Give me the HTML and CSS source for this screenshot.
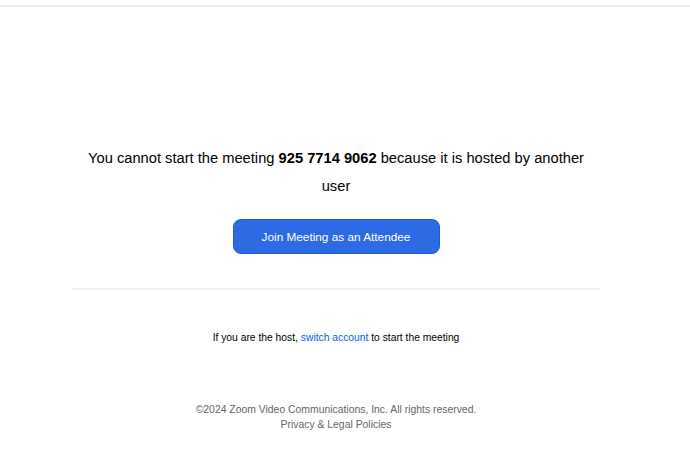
FILE: index.html
```html
<!DOCTYPE html>
<html lang="en">
<head>
<meta charset="utf-8">
<title>Zoom</title>
<link rel="stylesheet" href="styles.css">
</head>
<body>
<div class="topbar"></div>
<div class="page">
  <main class="content">
    <p class="message">You cannot start the meeting <strong>925 7714 9062</strong> because it is hosted by another user</p>
    <button class="join">Join Meeting as an Attendee</button>
    <hr class="divider">
    <p class="host">If you are the host, <a href="#" class="link">switch account</a> to start the meeting</p>
  </main>
  <footer class="footer">
    <div>©2024 Zoom Video Communications, Inc. All rights reserved.</div>
    <div>Privacy &amp; Legal Policies</div>
  </footer>
</div>
</body>
</html>
```

FILE: styles.css
```css
html, body {
  margin: 0;
  padding: 0;
  background: #fff;
}
body {
  font-family: "Liberation Sans", Arial, sans-serif;
  color: #000;
}
.topbar {
  height: 5px;
  border-bottom: 2px solid #eeeeee;
}
.page {
  width: 672px;
  display: flex;
  flex-direction: column;
  align-items: center;
}
.content {
  width: 528px;
  display: flex;
  flex-direction: column;
  align-items: center;
  padding-top: 137px;
}
.message {
  margin: 0;
  width: 510px;
  text-align: center;
  font-size: 14.7px;
  line-height: 28px;
}
.message strong {
  font-weight: bold;
}
.join {
  margin-top: 19px;
  width: 207px;
  height: 35px;
  border: 1px solid #1f5ad4;
  border-radius: 8px;
  background: #2d6be4;
  color: #fff;
  font-family: "Liberation Sans", Arial, sans-serif;
  font-size: 11.8px;
  cursor: pointer;
}
.divider {
  align-self: stretch;
  margin: 34px 0 0;
  border: 0;
  height: 2px;
  background: #f0f0f2;
}
.host {
  margin: 40px 0 0;
  font-size: 10.3px;
  line-height: 16px;
}
.link {
  color: #0e5ce6;
  text-decoration: none;
}
.footer {
  margin-top: 56px;
  text-align: center;
  font-size: 10.4px;
  line-height: 15px;
  color: #666;
}
```
